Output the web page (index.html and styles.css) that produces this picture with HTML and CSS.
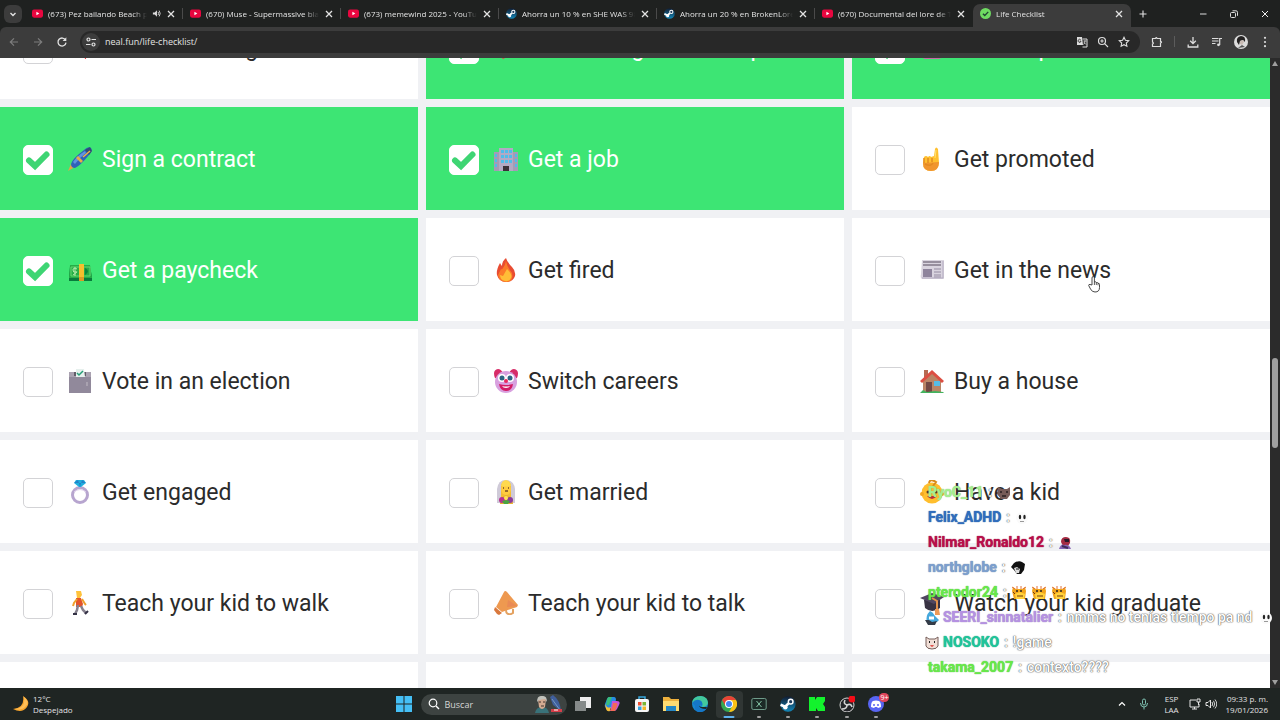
FILE: index.html
```html
<!DOCTYPE html>
<html lang="en">
<head>
  <meta charset="UTF-8" />
  <meta name="viewport" content="width=device-width, initial-scale=1" />
  <title>Life Checklist</title>
  <link rel="stylesheet" href="styles.css">
</head>
<body>
  <!-- shared icons -->
  <svg class="sprite" aria-hidden="true">
    <symbol id="youtube" viewBox="0 0 12 12"><rect x="0" y="1.5" width="12" height="9" rx="2.2" fill="#e8063f"/><path d="M4.8 4v4l3.2-2z" fill="#fff"/></symbol>
    <symbol id="steam" viewBox="0 0 24 24"><defs><linearGradient id="st" x2="0" y2="1"><stop stop-color="#111d33"/><stop offset="1" stop-color="#1387b8"/></linearGradient></defs><circle cx="12" cy="12" r="11.5" fill="url(#st)"/><path d="M0.8 13l7 3 5-5" stroke="#fff" stroke-width="4" fill="none"/><circle cx="8" cy="17" r="3.4" fill="#fff"/><circle cx="16" cy="8.5" r="4.6" fill="#fff"/><circle cx="16" cy="8.5" r="2.4" fill="#1a3a5c"/></symbol>
    <symbol id="close" viewBox="0 0 10 10"><path d="M2 2l6 6M8 2l-6 6" stroke="#e3e3e3" stroke-width="1.3"/></symbol>
    <symbol id="giraffe" viewBox="0 0 14 14"><path d="M1 1l3 2h6l3-2 1 4-1 8H2L0 5z" fill="#f2a51c"/><path d="M3 8l5-2 5 2-1 5H4z" fill="#ffd23c"/><path d="M0 1l3 2M11 3l3-2M5 0v3M9 0v3" stroke="#e0703c"/><circle cx="5" cy="5" r="1" fill="#222"/><circle cx="9" cy="5" r="1" fill="#222"/><path d="M5 10h6M1 6l2 2" stroke="#743b10" stroke-width="1"/></symbol>
    <symbol id="eyes" viewBox="0 0 14 14"><circle cx="7" cy="7" r="6" fill="#fafafa"/><ellipse cx="5" cy="6" rx="1.2" ry="2.2" fill="#222"/><ellipse cx="9.5" cy="6" rx="1.2" ry="2.2" fill="#222"/><path d="M5 10.5h4" stroke="#999"/></symbol>
  </svg>

  <header class="browser">
    <div class="tab-strip">
      <button class="tab-search" aria-label="Search tabs"><svg viewBox="0 0 10 10" width="10" height="10"><path d="M2.5 4L5 6.5 7.5 4" fill="none" stroke="#e3e3e3" stroke-width="1.4"/></svg></button>
      <nav class="tabs">
        <div class="tab"><svg class="favicon"><use href="#youtube"/></svg><a class="tab-title" href="#">(673) Pez bailando Beach party</a><svg class="audio" viewBox="0 0 10 10"><path d="M1 3.8h2L5.5 1.5v7L3 6.2H1z" fill="#ddd"/><path d="M6.7 3.2q1.4 1.8 0 3.6M8 1.8q2.2 3.2 0 6.4" fill="none" stroke="#ddd"/></svg><button class="tab-close" aria-label="Close tab"><svg><use href="#close"/></svg></button></div>
        <div class="tab"><svg class="favicon"><use href="#youtube"/></svg><a class="tab-title" href="#">(670) Muse - Supermassive black hole</a><button class="tab-close" aria-label="Close tab"><svg><use href="#close"/></svg></button></div>
        <div class="tab"><svg class="favicon"><use href="#youtube"/></svg><a class="tab-title" href="#">(673) memewind 2025 - YouTube</a><button class="tab-close" aria-label="Close tab"><svg><use href="#close"/></svg></button></div>
        <div class="tab"><svg class="favicon"><use href="#steam"/></svg><a class="tab-title" href="#">Ahorra un 10 % en SHE WAS 98</a><button class="tab-close" aria-label="Close tab"><svg><use href="#close"/></svg></button></div>
        <div class="tab"><svg class="favicon"><use href="#steam"/></svg><a class="tab-title" href="#">Ahorra un 20 % en BrokenLore: LOW</a><button class="tab-close" aria-label="Close tab"><svg><use href="#close"/></svg></button></div>
        <div class="tab"><svg class="favicon"><use href="#youtube"/></svg><a class="tab-title" href="#">(670) Documental del lore de Terraria</a><button class="tab-close" aria-label="Close tab"><svg><use href="#close"/></svg></button></div>
        <div class="tab active"><svg class="favicon" viewBox="0 0 12 12"><circle cx="6" cy="6" r="6" fill="#6fdc62"/><path d="M3.2 6.2l2 2 3.8-4" fill="none" stroke="#243" stroke-width="1.5"/></svg><a class="tab-title" href="#">Life Checklist</a><button class="tab-close" aria-label="Close tab"><svg><use href="#close"/></svg></button></div>
      </nav>
      <button class="new-tab" aria-label="New tab"><svg viewBox="0 0 10 10" width="10" height="10"><path d="M5 1.500v7M1.500 5h7" stroke="#e3e3e3" stroke-width="1.1"/></svg></button>
      <div class="window-buttons">
        <button aria-label="Minimize"><svg viewBox="0 0 10 10" width="10" height="10"><path d="M2 5h6.500" stroke="#ddd"/></svg></button>
        <button aria-label="Restore"><svg viewBox="0 0 10 10" width="10" height="10"><rect x="1.500" y="3.500" width="5" height="5" rx="1" fill="none" stroke="#ddd"/><path d="M3.500 1.800h3.500q1.500 0 1.500 1.500v3.500" fill="none" stroke="#ddd"/></svg></button>
        <button aria-label="Close"><svg viewBox="0 0 10 10" width="10" height="10"><path d="M2 2l6 6M8 2l-6 6" stroke="#eee"/></svg></button>
      </div>
    </div>

    <div class="toolbar">
      <button aria-label="Back"><svg viewBox="0 0 12 12"><path d="M10 6H2.500M6 2.300L2.300 6 6 9.700" fill="none" stroke="#7d7d7d" stroke-width="1.200"/></svg></button>
      <button aria-label="Forward"><svg viewBox="0 0 12 12"><path d="M2 6h7.500M6 2.300L9.700 6 6 9.700" fill="none" stroke="#7d7d7d" stroke-width="1.200"/></svg></button>
      <button aria-label="Reload"><svg viewBox="0 0 12 12"><path d="M9.500 4A4 4 0 1 0 10 6.600" fill="none" stroke="#e3e3e3" stroke-width="1.300"/><path d="M10.300 1.300v3.700H6.600z" fill="#e3e3e3"/></svg></button>
      <div class="address">
        <button class="site-info" aria-label="Site information"><svg viewBox="0 0 12 12" width="12" height="12"><g fill="none" stroke="#e3e3e3" stroke-width="1.200"><circle cx="3.500" cy="3.500" r="1.500"/><path d="M6.500 3.500h4.500M1 8.500h4.500"/><circle cx="8.500" cy="8.500" r="1.500"/></g></svg></button>
        <input class="url" type="text" aria-label="Address" value="neal.fun/life-checklist/">
        <button aria-label="Translate"><svg viewBox="0 0 12 12"><path d="M1 1h5l1 8H1z" fill="#ddd"/><path d="M6.500 3H11v8H6.500" fill="none" stroke="#ddd"/><path d="M4.800 4a1.500 1.500 0 1 0 .2 1.300H3.700" fill="none" stroke="#333" stroke-width=".9"/><path d="M7.500 5h3M9 4.500q0 3-1.500 4M8 6.500l2 2" fill="none" stroke="#ddd" stroke-width=".8"/></svg></button>
        <button aria-label="Zoom"><svg viewBox="0 0 12 12"><circle cx="5" cy="5" r="3.500" fill="none" stroke="#ddd" stroke-width="1.200"/><path d="M7.600 7.600L11 11M5 3.300v3.400M3.300 5h3.400" stroke="#ddd" stroke-width="1.100"/></svg></button>
        <button aria-label="Bookmark"><svg viewBox="0 0 12 12"><path d="M6 1.300l1.400 3 3.300.4-2.400 2.300.6 3.300L6 8.700l-2.900 1.600.6-3.300L1.300 4.700l3.300-.4z" fill="none" stroke="#ddd" stroke-width="1.100"/></svg></button>
      </div>
      <button aria-label="Extensions"><svg viewBox="0 0 12 12"><path d="M1.500 2.500h3q.8-1.800 1.600 0h3.400v2.900q2 .8 0 1.600v3.500h-8V8q1.700-.7 0-2z" fill="none" stroke="#ddd" stroke-width="1.200"/></svg></button>
      <span class="divider"></span>
      <button aria-label="Downloads"><svg viewBox="0 0 12 12"><path d="M6 1v6.500M3.200 4.800L6 7.600l2.800-2.800M1.200 8.500V11h9.600V8.500" fill="none" stroke="#ddd" stroke-width="1.300"/></svg></button>
      <button aria-label="Media controls"><svg viewBox="0 0 12 12"><path d="M1 2.500h6.500M1 5h6.500M1 7.500h3.500M8.700 9V2.500H11" fill="none" stroke="#ddd" stroke-width="1.200"/><circle cx="7.500" cy="8.800" r="1.400" fill="#ddd"/></svg></button>
      <button aria-label="Profile"><svg class="avatar" viewBox="0 0 14 14"><circle cx="7" cy="7" r="7" fill="#dcdcdc"/><path d="M3 7q-1-5 4-6 5 0 4 6l-2-2-3 1-1 4z" fill="#242222"/><path d="M6 6l3-1 1 2-2 3-2-1z" fill="#c9bbb4"/><path d="M4 13l4-3 3 2z" fill="#555"/></svg></button>
      <button aria-label="Menu"><svg viewBox="0 0 12 12"><g fill="#ddd"><circle cx="6" cy="1.800" r="1.100"/><circle cx="6" cy="6" r="1.100"/><circle cx="6" cy="10.200" r="1.100"/></g></svg></button>
    </div>
  </header>

  <main class="viewport">
    <div class="page">
      <div class="checklist">
        <label class="item"><input type="checkbox"><svg class="emoji" viewBox="0 0 24 24"><path d="M12 2l7 7-1 14h-1z" fill="#e8434a"/></svg><span>Host a meeting</span></label>
        <label class="item done"><input type="checkbox" checked><svg class="emoji" viewBox="0 0 24 24"><path d="M9 23q-8-7-8-13t9-5q10-2 11 5t-12 13z" fill="#e8434a"/></svg><span>Last through a breakup</span></label>
        <label class="item done"><input type="checkbox" checked><svg class="emoji" viewBox="0 0 24 24"><rect x="3" y="3" width="18" height="20" rx="2" fill="#c46aa6"/></svg><span>Get an apartment</span></label>

        <label class="item done"><input type="checkbox" checked><svg class="emoji" viewBox="0 0 24 24"><path d="M0 24l3-7 4 3z" fill="#e0a44a"/><path d="M3 17Q4 12 16 3q4-4 7-2 2 3-2 7Q12 19 7 21q-4 0-4-4z" fill="#2f62b8"/><path d="M5 15Q9 9 17 4l1 2Q11 11 7 17z" fill="#5f92e0"/><path d="M8 11l5 5 2-2-5-5z" fill="#e5ae45"/><path d="M17 3l4 5 3-4-2-4z" fill="#314b77"/><path d="M15 10l7-6" stroke="#edb445" stroke-width="1.500"/></svg><span>Sign a contract</span></label>
        <label class="item done"><input type="checkbox" checked><svg class="emoji" viewBox="0 0 24 24"><path d="M0 5h6v19H0zM18 5h6v19h-6z" fill="#a59bb5"/><path d="M5 1h14v23H5z" fill="#b3a9c4"/><g fill="#50bce9"><path d="M7 3h3v3H7zM11 3h3v3h-3zM15 3h3v3h-3zM7 8h3v3H7zM11 8h3v3h-3zM15 8h3v3h-3zM7 13h3v3H7zM11 13h3v3h-3zM15 13h3v3h-3zM1 7h2v3H1zM1 12h2v3H1zM1 17h2v3H1zM21 7h2v3h-2zM21 12h2v3h-2zM21 17h2v3h-2z"/></g><path d="M9 19h6v5H9z" fill="#3b3038"/></svg><span>Get a job</span></label>
        <label class="item"><input type="checkbox"><svg class="emoji" viewBox="0 0 24 24"><path d="M15 2q1-3 3 0l1 14q-1 8-8 8-8 0-8-8l1-6q2-2 4 0 2-2 3 0l3-1z" fill="#ffc02f"/><path d="M3 16l16-1q0 9-8 9-8 0-8-8z" fill="#f0952f"/><path d="M4 11v5M8 11v5M12 11v4M5 17q6 3 8-1" fill="none" stroke="#e38a22" stroke-width="1.500"/><path d="M16 3l-1 8" stroke="#ffe275"/></svg><span>Get promoted</span></label>

        <label class="item done"><input type="checkbox" checked><svg class="emoji" viewBox="0 0 24 24"><path d="M1 19l1-10h20l2 10v4H1z" fill="#087c3c"/><path d="M2 7h20l2 13H1z" fill="#27ad47"/><path d="M3 9h19v9H3z" fill="none" stroke="#62d870"/><path d="M11 6h5v17h-5z" fill="#f6bf2d"/><path d="M11 19h5v4h-5z" fill="#dd9925"/><path d="M9 11q-4-2-4 1t3 2-3 3M7 9v9" fill="none" stroke="#b6efac"/><path d="M17 10q6 3 0 7z" fill="#0c853e"/></svg><span>Get a paycheck</span></label>
        <label class="item"><input type="checkbox"><svg class="emoji" viewBox="0 0 24 24"><path d="M12 0q1 4 6 9 4 4 3 9-2 6-9 6T3 17q-1-5 3-12 1 2 2 3 0-5 4-8z" fill="#e84c32"/><path d="M9 10q2-2 3-7 1 6 6 12 2 9-6 9-7 0-8-7l3-6q1 1 2-1z" fill="#fb7b29"/><path d="M13 11q6 6 4 9-2 4-6 3-5-1-5-6l3 1z" fill="#ffbe37"/></svg><span>Get fired</span></label>
        <label class="item"><input type="checkbox"><svg class="emoji" viewBox="0 0 24 24"><path d="M2 2h22v19H2q-2-1-1-5z" fill="#d9d4df"/><path d="M3 4h18M3 7h18" stroke="#817889" stroke-width="1.500"/><path d="M3 11h9v8H3z" fill="#8e849c"/><path d="M14 11h7M14 14h7M14 17h7M14 19h7" stroke="#958ca2"/><path d="M23 3v17H2" fill="none" stroke="#b3abc0"/></svg><span>Get in the news</span></label>

        <label class="item"><input type="checkbox"><svg class="emoji" viewBox="0 0 24 24"><path d="M1 3h22v21H1z" fill="#91899b"/><path d="M1 3h22v5H1z" fill="#aaa2b1"/><path d="M6 3h12v4H6z" fill="#625c68"/><path d="M8 0h8l1 8H8z" fill="#e6f0ed"/><path d="M9 4l2 2 4-4" fill="none" stroke="#269e77" stroke-width="1.500"/><path d="M19 13v4" stroke="#c0bac4"/></svg><span>Vote in an election</span></label>
        <label class="item"><input type="checkbox"><svg class="emoji" viewBox="0 0 24 24"><path d="M1 9Q-2 1 4 0q3 0 5 4l-4 6zM23 9q3-8-3-9-3 0-5 4l4 6z" fill="#d72b67"/><ellipse cx="12" cy="13" rx="11" ry="11" fill="#d8a0df"/><ellipse cx="8" cy="9" rx="4" ry="4" fill="#fff"/><ellipse cx="16" cy="9" rx="4" ry="4" fill="#fff"/><circle cx="8" cy="9" r="2.500" fill="#2c6382"/><circle cx="16" cy="9" r="2.500" fill="#2c6382"/><circle cx="12" cy="12" r="2" fill="#e9295e"/><path d="M5 15q7 2 14 0-1 7-7 7t-7-7z" fill="#d31c65"/><path d="M8 17q4 1 8 0-1 2-4 2t-4-2z" fill="#fff"/></svg><span>Switch careers</span></label>
        <label class="item"><input type="checkbox"><svg class="emoji" viewBox="0 0 24 24"><path d="M4 1h4v10H4z" fill="#b66a52"/><path d="M3 12l9-8 9 8v11H3z" fill="#ba8465"/><path d="M6 13h6v10H6z" fill="#724844"/><path d="M14 12h6v5h-6z" fill="#55bce6"/><path d="M0 12L12 1l12 11-2 2L12 5 2 14z" fill="#dc4e42"/><path d="M0 24l3-3 4 2 8-1 8 1 1 1z" fill="#43b35e"/></svg><span>Buy a house</span></label>

        <label class="item"><input type="checkbox"><svg class="emoji" viewBox="0 0 24 24"><circle cx="12" cy="15" r="7.500" fill="none" stroke="#b7a5cf" stroke-width="3"/><path d="M6 12q6-5 12 0" fill="none" stroke="#e0d3ec"/><path d="M8 0h8l2 3-5 4h-2L6 3z" fill="#1faede"/><path d="M6 3h12l-4-3-2 7-2-7z" fill="#2382c7"/></svg><span>Get engaged</span></label>
        <label class="item"><input type="checkbox"><svg class="emoji" viewBox="0 0 24 24"><path d="M3 23V9q1-9 9-9t9 9v14z" fill="#cfcad8"/><path d="M7 17V7q0-6 5-6t5 6v10z" fill="#f3bc36"/><ellipse cx="12" cy="9" rx="5" ry="6" fill="#ffcb3f"/><path d="M7 6q5 1 10 0-1-6-5-6T7 6z" fill="#ffd94e"/><path d="M9 8h1M14 8h1M11 11h3" stroke="#744b27" stroke-width="1.500"/><path d="M6 24q0-8 6-9 7 1 7 9z" fill="#e8b22c"/><circle cx="8" cy="20" r="3" fill="#b83290"/><circle cx="16" cy="20" r="3" fill="#8b3b9b"/><path d="M8 21l4-1 4 1-2 3h-4z" fill="#4ba441"/><circle cx="12" cy="18" r="2" fill="#ffe058"/></svg><span>Get married</span></label>
        <label class="item"><input type="checkbox"><svg class="emoji" viewBox="0 0 24 24"><circle cx="12" cy="13" r="10.500" fill="#ffbe2d"/><circle cx="2" cy="14" r="2" fill="#f3a723"/><circle cx="22" cy="14" r="2" fill="#f3a723"/><path d="M9 3q1-5 7-1l-3 4" fill="none" stroke="#d98a1a" stroke-width="2"/><circle cx="8" cy="12" r="1.500" fill="#553525"/><circle cx="16" cy="12" r="1.500" fill="#553525"/><path d="M7 16q5 6 10 0z" fill="#b92c39"/></svg><span>Have a kid</span></label>

        <label class="item"><input type="checkbox"><svg class="emoji" viewBox="0 0 24 24"><path d="M8 0h5l1 4-2 3H9z" fill="#ffc23b"/><path d="M8 7h5l2 6-1 3H8z" fill="#e3532b"/><path d="M9 8l-3 4-1 3M14 8l3 5 1 1" fill="none" stroke="#efa02c" stroke-width="2"/><path d="M10 14l-1 5-2 4M13 15l2 4 3 3" fill="none" stroke="#85808d" stroke-width="2.500"/><path d="M5 23h4M17 23l3-3" stroke="#333145" stroke-width="2"/></svg><span>Teach your kid to walk</span></label>
        <label class="item"><input type="checkbox"><svg class="emoji" viewBox="0 0 24 24"><path d="M10 1q1-2 3 0l11 13-1 2-15 5-6-5z" fill="#ee9950"/><path d="M1 16l7 6-3 2-2-1-3-4z" fill="#d9783c"/><path d="M14 9l9 6-10 1z" fill="#e98a55"/><path d="M12 19q0 5 5 4l2-1v-4" fill="none" stroke="#e4a261" stroke-width="2"/></svg><span>Teach your kid to talk</span></label>
        <label class="item"><input type="checkbox"><svg class="emoji" viewBox="0 0 24 24"><path d="M4 9h16v8q-8 6-15 0z" fill="#383243"/><path d="M0 7l12-5 12 4-10 7z" fill="#504660"/><path d="M12 7l5 3v10" fill="none" stroke="#df914d" stroke-width="2"/><path d="M15 18h4l1 6h-5z" fill="#ee9a58"/></svg><span>Watch your kid graduate</span></label>

        <div class="item"></div>
        <div class="item"></div>
        <div class="item"></div>
      </div>
    </div>
    <div class="scrollbar">
      <svg viewBox="0 0 10 10" width="10" height="10"><path d="M5 3l3 5H2z" fill="#9f9f9f"/></svg>
      <div class="track"><span class="thumb"></span></div>
      <svg viewBox="0 0 10 10" width="10" height="10"><path d="M5 7l3-5H2z" fill="#9f9f9f"/></svg>
    </div>

    <ul class="chat">
      <li><b class="ryo">RyoC_11</b><i>:</i><svg viewBox="0 0 14 14"><path d="M1 1l4 2h5l3-2v8l-3 4H4L0 8z" fill="#765b58"/><path d="M3 6h2M9 6h2M5 10h4" stroke="#291f20" stroke-width="1.500"/></svg></li>
      <li><b class="felix">Felix_ADHD</b><i>:</i><svg><use href="#eyes"/></svg></li>
      <li><b class="nilmar">Nilmar_Ronaldo12</b><i>:</i><svg viewBox="0 0 14 14"><path d="M3 6q0-5 5-5t4 6l-2 3H5z" fill="#a42b42"/><path d="M6 3h5v3H7z" fill="#271a2a"/><path d="M1 13q2-6 5-4 5-1 7 4z" fill="#8865b5"/><path d="M4 10l6 2" stroke="#402b59" stroke-width="2"/></svg></li>
      <li><b class="north">northglobe</b><i>:</i><svg viewBox="0 0 14 14"><path d="M0 6l3-4q5-3 8-1l3 2-1 6-3 4H6L3 9z" fill="#111"/><path d="M3 7l3-1 3 2-1 4H5z" fill="#ddd"/><path d="M5 8h3" stroke="#111"/></svg></li>
      <li><b class="ptero">pterodor24</b><i>:</i><svg><use href="#giraffe"/></svg><svg class="next"><use href="#giraffe"/></svg><svg class="next"><use href="#giraffe"/></svg></li>
      <li class="badged"><svg viewBox="0 0 14 14"><path d="M5 0q3 1 5 5l4 4-2 2H2Q0 5 5 0z" fill="#45a8dd"/><path d="M0 9h4l3 2 5-1-2 4H3z" fill="#343c48"/><path d="M4 7h5" stroke="#fff" stroke-width="3"/></svg><b class="seeri">SEERI_sinnatalier</b><i>:</i><span>nmms no tenías tiempo pa nd</span><svg class="next"><use href="#eyes"/></svg></li>
      <li class="badged"><svg viewBox="0 0 14 14"><path d="M1 1l3 2h6l3-2v9q-1 3-6 3t-6-3z" fill="#f1ded6" stroke="#765f5b"/><path d="M4 6h1M9 6h1" stroke="#222" stroke-width="2"/><path d="M5 9h4q-2 4-4 0z" fill="#de564f"/></svg><b class="nosoko">NOSOKO</b><i>:</i><span>!game</span></li>
      <li><b class="ptero">takama_2007</b><i>:</i><span>contexto????</span></li>
    </ul>

    <svg class="pointer" viewBox="0 0 12 17"><path d="M4 9V2q0-1.500 1.200-1.500T6.400 2v4q1.600-.8 1.900.6 1.500-.5 1.700.7 1.500-.3 1.500 1.200v3q0 4.500-4.500 4.500-3 0-4.500-3L.7 9.500q0-1.500 1.300-1z" fill="#fff" stroke="#333" stroke-width=".9"/><path d="M6.400 6v3M8.300 6.600V9M10 7.300v2" stroke="#333" stroke-width=".8"/></svg>
  </main>

  <footer class="taskbar">
    <button class="weather">
      <svg viewBox="0 0 16 16" width="16" height="16"><path d="M10 0q8 5 4 11-5 7-14 2 12-1 10-13z" fill="#f8a52c"/><path d="M11 1q6 5 2 9-4 5-11 3 11-1 9-12z" fill="#ffbf58"/></svg>
      <span>12°C<br>Despejado</span>
    </button>

    <div class="center">
      <button class="app" aria-label="Start"><svg viewBox="0 0 16 16"><path d="M0 0h7.500v7.500H0zM8.500 0H16v7.500H8.500zM0 8.500h7.500V16H0zM8.500 8.500H16V16H8.500z" fill="#45bff5"/></svg></button>
      <div class="search">
        <svg viewBox="0 0 12 12" width="12" height="12"><circle cx="5" cy="5" r="3.800" fill="none" stroke="#fff" stroke-width="1.200"/><path d="M8 8l3 3" stroke="#fff" stroke-width="1.400"/></svg>
        <input type="text" aria-label="Buscar" placeholder="Buscar">
        <svg viewBox="0 0 30 18" width="30" height="18"><path d="M2 18q1-6 7-6t7 6z" fill="#397279"/><path d="M5 4q4-5 8 0l-1 8q-3 4-6 0z" fill="#d4aa91"/><path d="M4 7q0-7 5-6 5-1 5 6l-2-3-6 1z" fill="#c1c2bb"/><path d="M6 7h2M10 7h2M8 11h3" stroke="#42342f"/><path d="M17 2l3-2q7 5 8 16l-8-6z" fill="#405f9c"/><path d="M19 4l8 11" stroke="#7599c3"/><path d="M18 14h11v3H18z" fill="#d53e49"/><path d="M21 15h4" stroke="#fff"/></svg>
      </div>
      <div class="apps">
        <button class="app" aria-label="Task view"><svg viewBox="0 0 16 16"><path d="M5 1h11v11H5z" fill="#ededed"/><path d="M0 5h11v10H0z" fill="#858a89"/></svg></button>
        <button class="app" aria-label="Copilot"><svg viewBox="0 0 16 16"><path d="M5 1h5q2 0 2 3L9 12H3Q0 12 1 8l2-5q1-2 2-2z" fill="#268ce5"/><path d="M1 8l2 3q2 1 4 0l-1 4q-3 1-4-2z" fill="#f1bd38"/><path d="M8 5h5q4 0 2 4l-2 4q-1 2-3 2H5q2 0 2-3z" fill="#c653d8"/><path d="M9 7h3q2 0 1 3l-2 5H6l2-3z" fill="#f16b55"/><path d="M3 3q1-2 2-2h3L5 9H2z" fill="#39bd7b"/></svg></button>
        <button class="app" aria-label="Store"><svg viewBox="0 0 16 16"><path d="M5 4V1h6v3" fill="none" stroke="#38a7dc" stroke-width="1.500"/><rect x="1" y="3" width="14" height="13" rx="2" fill="#f6f6f6"/><path d="M4 6h3.500v3.500H4z" fill="#ed4f32"/><path d="M8.500 6H12v3.500H8.500z" fill="#79b532"/><path d="M4 10.500h3.500V14H4z" fill="#33a2df"/><path d="M8.500 10.500H12V14H8.500z" fill="#f3b627"/></svg></button>
        <button class="app" aria-label="File Explorer"><svg viewBox="0 0 16 16"><path d="M0 1h6l2 2h8v12H0z" fill="#eeb13d"/><path d="M0 5h16v10H0z" fill="#ffdc72"/><path d="M3 10h10v5H3z" fill="#2588c6"/></svg></button>
        <button class="app" aria-label="Edge"><svg viewBox="0 0 16 16"><circle cx="8" cy="8" r="8" fill="#1787d0"/><path d="M0 7Q1 0 9 0q7 1 7 7-1 4-6 4 2-5-3-6-4 0-7 2z" fill="#43c99c"/><path d="M0 7q3-4 7-3 4 1 3 5-3-1-3 1 1 4 7 3-3 4-8 3-4-2-3-6-1-2-3-3z" fill="#1577c8"/><path d="M7 9q0 4 7 4l1-2H9q-2-1-2-2z" fill="#1f2523"/></svg></button>
        <button class="app running current" aria-label="Chrome"><svg viewBox="0 0 16 16"><circle cx="8" cy="8" r="8" fill="#35a853"/><path d="M1.100 4A8 8 0 0 1 15 4H8v4l-3.500 2z" fill="#e94335"/><path d="M15 4H8l3.500 6L8 16A8 8 0 0 0 15 4z" fill="#fbc116"/><circle cx="8" cy="8" r="4" fill="#fff"/><circle cx="8" cy="8" r="3" fill="#4285f4"/></svg></button>
        <button class="app running" aria-label="Capture"><svg viewBox="0 0 16 16"><rect x=".8" y="2.500" width="14.400" height="11" rx="1.500" fill="#1b2a26" stroke="#6f9c8a" stroke-width="1"/><path d="M5.500 5l5 6M10.500 5l-5 6" stroke="#83c3a4" stroke-width="1"/></svg></button>
        <button class="app running" aria-label="Steam"><svg><use href="#steam"/></svg></button>
        <button class="app running" aria-label="Kick"><svg viewBox="0 0 16 16"><path d="M0 1h6v3l2-3h8v4l-2 3 2 3v4H9l-2-3v3H0z" fill="#13f22d"/></svg></button>
        <button class="app running" aria-label="OBS"><svg viewBox="0 0 16 16"><circle cx="8" cy="9" r="7" fill="#242529" stroke="#d4d4d4"/><path d="M8 9q-4-1-2-5M8 9q4-2 5 2M8 9q0 4-5 4" fill="none" stroke="#d4d4d4" stroke-width="1.600"/><circle cx="13" cy="3" r="3.500" fill="#f40d17"/></svg></button>
        <button class="app running" aria-label="Discord"><svg viewBox="0 0 16 16"><circle cx="8" cy="8" r="8" fill="#5865f2"/><path d="M3 11q0-5 2-6 3-1 6 0 2 1 2 6l-3 1-1-1H7l-1 1z" fill="#fff"/><circle cx="6" cy="9" r="1" fill="#5865f2"/><circle cx="10" cy="9" r="1" fill="#5865f2"/></svg><span class="badge">9+</span></button>
      </div>
    </div>

    <div class="tray">
      <button aria-label="Hidden icons"><svg viewBox="0 0 12 12" width="12" height="12"><path d="M3 7.500l3-3 3 3" fill="none" stroke="#fff" stroke-width="1.200"/></svg></button>
      <button aria-label="Microphone"><svg viewBox="0 0 12 12" width="12" height="12"><rect x="4.500" y="1" width="3" height="6" rx="1.500" fill="none" stroke="#7fc2b2"/><path d="M2.500 5q0 4 3.500 4t3.500-4M6 9v2.500" fill="none" stroke="#7fc2b2"/></svg></button>
      <button class="language">ESP<br>LAA</button>
      <button class="status" aria-label="Network and volume"><svg viewBox="0 0 12 12" width="12" height="12"><path d="M7 2H1v7h9V6M3 11h5M5.500 9v2" fill="none" stroke="#e5e5e5"/><path d="M8 1h3v3H8zM9.500 4v3" fill="none" stroke="#e5e5e5"/></svg><svg viewBox="0 0 12 12" width="12" height="12"><path d="M1 4.500h2L5.500 2v8L3 7.500H1z" fill="none" stroke="#e5e5e5"/><path d="M7 4q1.500 2 0 4M8.500 2.800q2.500 3.200 0 6.400M10 1.500q3.500 4.500 0 9" fill="none" stroke="#e5e5e5" stroke-width=".9"/></svg></button>
      <button class="clock">09:33 p. m.<br>19/01/2026</button>
    </div>
  </footer>
</body>
</html>
```

FILE: styles.css
```css
* {
  box-sizing: border-box;
}
body {
  margin: 0;
  height: 100vh;
  display: flex;
  flex-direction: column;
  overflow: hidden;
  background: #1f2120;
  font-family: "Open Sans", "Noto Sans", sans-serif;
  font-size: 9px;
  color: #e3e3e3;
}
button {
  display: flex;
  align-items: center;
  justify-content: center;
  padding: 0;
  border: none;
  background: none;
  color: inherit;
  font: inherit;
  cursor: pointer;
}
input {
  font: inherit;
  color: inherit;
}
svg {
  flex: none;
}
.sprite {
  position: absolute;
  width: 0;
  height: 0;
}

/* Tabs */
.tab-strip {
  display: flex;
  align-items: center;
  height: 27px;
  padding-left: 4px;
}
.tab-search {
  width: 18px;
  height: 18px;
  margin-right: 3px;
  border-radius: 6px;
  background: #3c3c3c;
}
.tabs {
  display: flex;
  flex: 0 1 1106px;
  min-width: 0;
  align-self: stretch;
  padding-top: 4px;
}
.tab {
  display: flex;
  align-items: center;
  flex: 1 1 0;
  min-width: 0;
  gap: 5px;
  padding: 0 7px 4px;
  position: relative;
  font-size: 8px;
}
.tab:not(.active)::after {
  content: "";
  position: absolute;
  right: 0;
  top: 4px;
  height: 11px;
  border-right: 1px solid #4a4a4a;
}
.tab:nth-child(6)::after {
  display: none;
}
.tab.active {
  background: #3c3c3c;
  border-radius: 7px 7px 0 0;
}
.favicon {
  width: 11px;
  height: 11px;
}
.tab-title {
  flex: 1;
  overflow: hidden;
  white-space: nowrap;
  color: inherit;
  text-decoration: none;
  -webkit-mask-image: linear-gradient(to left, transparent, #000 14px);
  mask-image: linear-gradient(to left, transparent, #000 14px);
}
.audio {
  width: 9px;
  height: 9px;
}
.tab-close,
.tab-close svg {
  width: 10px;
  height: 10px;
}
.new-tab {
  width: 24px;
  height: 20px;
}
.window-buttons {
  display: flex;
  margin-left: auto;
}
.window-buttons button {
  width: 31px;
  height: 26px;
}

/* Toolbar */
.toolbar {
  display: flex;
  align-items: center;
  height: 31px;
  padding: 0 3px 2px 2px;
  background: #3c3c3c;
  border-radius: 6px 6px 0 0;
}
.toolbar button {
  width: 24px;
  height: 22px;
}
.toolbar svg {
  width: 12px;
  height: 12px;
}
.address {
  flex: 1;
  display: flex;
  align-items: center;
  height: 22px;
  margin: 0 5px 0 6px;
  padding: 0 6px 0 2px;
  border-radius: 11px;
  background: #282828;
}
.address button {
  width: 21px;
}
.address .site-info {
  width: 18px;
  height: 18px;
  border-radius: 50%;
  background: #3c3c3c;
}
.url {
  flex: 1;
  min-width: 0;
  margin-left: 5px;
  padding: 0;
  border: none;
  outline: none;
  background: none;
}
.divider {
  width: 1px;
  height: 11px;
  margin: 0 6px 0 5px;
  background: #5c5c5c;
}
.toolbar .avatar {
  width: 14px;
  height: 14px;
}

/* Page */
.viewport {
  flex: 1;
  min-height: 0;
  display: flex;
  position: relative;
}
.page {
  flex: 1;
  overflow: hidden;
  background: #f0f1f4;
  font-family: Roboto, sans-serif;
  font-size: 23px;
  color: #2b2b2b;
}
/* scrolled part way through the first row */
.checklist {
  display: grid;
  grid-template-columns: repeat(3, 1fr);
  grid-auto-rows: 103px;
  gap: 8px;
  margin-top: -62px;
}
.item {
  display: flex;
  align-items: center;
  padding: 2px 23px 0;
  background: #fff;
  white-space: nowrap;
  cursor: pointer;
}
.item.done {
  background: #3de574;
  color: #fff;
}
.item input {
  appearance: none;
  flex: none;
  width: 30px;
  height: 30px;
  margin: 0 15px 0 0;
  border: 1px solid #d3d3d6;
  border-radius: 5px;
  background: #fff;
}
.item input:checked {
  border-color: #fff;
  background: #fff url("data:image/svg+xml,%3Csvg xmlns='http://www.w3.org/2000/svg' viewBox='0 0 28 28'%3E%3Cpath d='M5 14.500l6 5.500L22.500 8.500' fill='none' stroke='%233ed573' stroke-width='6' stroke-linecap='round'/%3E%3C/svg%3E");
}
.emoji {
  width: 24px;
  height: 24px;
  margin: 0 10px 2px 0;
}

.scrollbar {
  display: flex;
  flex-direction: column;
  width: 10px;
  background: #2b2b2b;
}
.track {
  flex: 1;
  display: grid;
  grid-template-rows: 290fr 90fr 230fr;
  padding: 0 2px;
}
.thumb {
  grid-row: 2;
  border-radius: 3px;
  background: #9f9f9f;
}

/* Chat laid over the page */
.chat {
  position: absolute;
  right: 4px;
  bottom: 8px;
  width: 351px;
  margin: 0;
  padding: 0;
  list-style: none;
  font-family: Roboto, sans-serif;
  font-size: 14px;
  font-weight: 500;
  line-height: 25px;
  color: #fff;
  white-space: nowrap;
  pointer-events: none;
  text-shadow: 0 0 1px #555, 0 0 1px #666, 0 0 2px #999;
}
.chat li {
  display: flex;
  align-items: center;
  height: 25px;
  padding-left: 3px;
}
.chat .badged {
  padding-left: 0;
}
.chat .badged b {
  margin-left: 4px;
}
.chat svg {
  width: 14px;
  height: 14px;
}
.chat .next {
  margin-left: 6px;
}
.chat i {
  margin: 0 5px;
  font-style: normal;
}
.chat b {
  font-weight: 700;
  text-shadow: 0 0 1px currentColor, 0 0 1px #0006;
}
.ryo {
  color: #a5ee8f;
}
.felix {
  color: #2f6dbd;
}
.nilmar {
  color: #b90e4a;
}
.north {
  color: #7c9fce;
}
.ptero {
  color: #67e84a;
}
.seeri {
  color: #b591e2;
}
.nosoko {
  color: #1fc49a;
}

.pointer {
  position: absolute;
  left: 1088px;
  top: 218px;
  width: 12px;
  height: 17px;
}

/* Taskbar */
.taskbar {
  display: grid;
  grid-template-columns: 1fr auto 1fr;
  align-items: center;
  height: 32px;
  background: #1f2523;
  font-size: 8px;
  line-height: 11px;
}
.weather {
  justify-self: start;
  gap: 4px;
  padding-left: 13px;
  text-align: left;
}
.center {
  display: flex;
  align-items: center;
  gap: 3px;
}
.app {
  width: 27px;
  height: 27px;
  border-radius: 4px;
  position: relative;
}
.app svg {
  width: 16px;
  height: 16px;
}
.app.current {
  background: #303634;
}
.app.running::after {
  content: "";
  position: absolute;
  bottom: 0;
  left: 50%;
  width: 4px;
  height: 2px;
  border-radius: 1px;
  background: #a0a0a0;
  transform: translateX(-50%);
}
.app.current::after {
  width: 11px;
  background: #5fb2ef;
}
.search {
  display: flex;
  align-items: center;
  width: 146px;
  height: 21px;
  padding: 0 4px 0 7px;
  border-radius: 11px;
  background: #3d4341;
}
.search input {
  flex: 1;
  min-width: 0;
  margin-left: 5px;
  padding: 0;
  border: none;
  background: none;
  font-size: 9px;
}
.search input::placeholder {
  color: #d6d6d6;
}
.apps {
  display: flex;
  justify-content: space-between;
  width: 320px;
}
.badge {
  position: absolute;
  top: 2px;
  right: 0;
  padding: 0 1px;
  border-radius: 5px;
  background: #e0455b;
  color: #fff;
  font-size: 7px;
  line-height: 9px;
}
.tray {
  display: flex;
  align-items: center;
  justify-self: end;
  padding-right: 12px;
}
.tray button {
  min-width: 22px;
  height: 28px;
}
.tray .language {
  margin: 0 6px;
}
.tray .status {
  gap: 4px;
}
.tray .clock {
  margin-left: 9px;
  text-align: right;
}
```
